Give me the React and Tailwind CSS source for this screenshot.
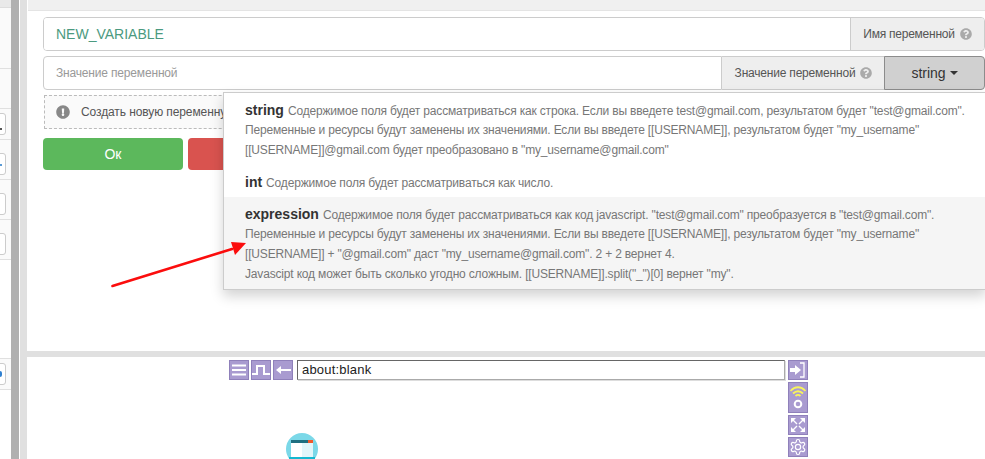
import React from "react";
import { FaQuestionCircle, FaExclamationCircle } from "react-icons/fa";

const Help = () => <FaQuestionCircle className="inline-block ml-[5px] w-[12px] h-[12px] text-[#aaa] align-[-1px]" />;

function SideInput({ top, mark }) {
  return (
    <div className={`absolute left-[-6px] ${top} w-[12px] h-[22px] bg-white border border-[#ccc] rounded-[3px]`}>
      {mark}
    </div>
  );
}

function Sidebar() {
  return (
    <div className="flex w-[27px] h-full shrink-0">
      <div className="w-[11px] flex flex-col bg-white overflow-hidden">
        <div className="h-[8px] bg-[#e9e9e9] shrink-0 border-b border-[#ddd]" />
        <div className="h-[61px] bg-[#fafafa] border-b border-[#e0e0e0] shrink-0" />
        <div className="h-[40px] bg-[#fafafa] border-b border-[#e0e0e0] shrink-0" />
        <div className="h-[31px] shrink-0 bg-[#fafafa] border-b border-[#e0e0e0] relative">
          <SideInput top="top-[4px]" mark={<span className="absolute left-[5px] top-[14px] w-[2px] h-[2px] bg-[#555]" />} />
        </div>
        <div className="h-[40px] shrink-0 bg-[#fafafa] border-b border-[#e0e0e0] relative">
          <SideInput top="top-[13px]" mark={<span className="absolute left-[5px] top-[10px] w-[2px] h-[2px] bg-[#5b9bd5]" />} />
        </div>
        <div className="h-[40px] shrink-0 bg-[#fafafa] border-b border-[#e0e0e0] relative">
          <SideInput top="top-[13px]" />
        </div>
        <div className="h-[40px] shrink-0 bg-[#fafafa] border-b border-[#e0e0e0] relative">
          <SideInput top="top-[13px]" />
        </div>
        <div className="h-[98px] shrink-0" />
        <div className="h-[32px] shrink-0 bg-[#fafafa] border-y border-[#e0e0e0] relative">
          <SideInput top="top-[4px]" mark={<span className="absolute left-[5px] top-[7px] w-[2px] h-[6px] rounded-r-full bg-[#2f80d0]" />} />
        </div>
      </div>
      <div className="w-[8px] bg-[#b0b0b0]" />
      <div className="w-px bg-white" />
      <div className="w-[7px] bg-[#e0e0e0]" />
    </div>
  );
}

function Form() {
  return (
    <div className="pl-[16px] flex flex-col font-['Liberation_Sans',sans-serif]">
      <div className="flex h-[34px] mt-[6px] border border-[#ccc] rounded-[4px] overflow-hidden">
        <div className="flex-1 bg-white px-[12px] flex items-center text-[14px] text-[#4b9a80]">NEW_VARIABLE</div>
        <div className="w-[134px] shrink-0 bg-[#eee] border-l border-[#ccc] flex items-center justify-center text-[12px] text-[#555] tracking-[-0.25px]">
          Имя переменной<Help />
        </div>
      </div>
      <div className="flex h-[34px] mt-[5px]">
        <div className="flex-1 bg-white border border-[#ccc] rounded-l-[4px] px-[12px] flex items-center text-[12px] text-[#999] tracking-[-0.17px]">Значение переменной</div>
        <div className="w-[163px] shrink-0 bg-[#eee] border-y border-[#ccc] flex items-center justify-center text-[12px] text-[#555] tracking-[-0.2px]">
          Значение переменной<Help />
        </div>
        <div className="w-[101px] ml-[-1px] shrink-0 bg-[#d0d0d0] border border-[#8c8c8c] rounded-r-[4px] flex items-center justify-center text-[14px] text-[#333]">
          string
          <span className="ml-[4px] w-0 h-0 border-x-[4px] border-x-transparent border-t-[4px] border-t-[#333]" />
        </div>
      </div>
      <div className="flex items-center h-[34px] mt-[5px] ml-px border border-dashed border-[#bbb] bg-[#fafafa] px-[11px] text-[12px] text-[#555] tracking-[-0.1px]">
        <FaExclamationCircle className="w-[14px] h-[14px] text-[#888] mr-[11px]" />
        Создать новую переменную
      </div>
      <div className="flex gap-[5px] mt-[9px]">
        <div className="w-[140px] h-[32px] rounded-[4px] bg-[#5cb85c] text-white text-[14px] flex items-center justify-center">Ок</div>
        <div className="w-[140px] h-[32px] rounded-[4px] bg-[#d9534f]" />
      </div>
    </div>
  );
}

function Item({ title, lines, active, cls }) {
  return (
    <div className={`px-[21px] ${cls} ${active ? "bg-[#f5f5f5]" : ""}`}>
      {lines.map((l, i) => (
        <div key={i} className="h-[20px] leading-[20px] whitespace-nowrap text-[12px] text-[#777] tracking-[-0.17px]">
          {i === 0 && <b className="text-[14px] font-bold text-[#333] tracking-[0px] mr-[4px]">{title}</b>}
          {l}
        </div>
      ))}
    </div>
  );
}

function Dropdown() {
  return (
    <div className="absolute left-[223px] top-[92px] w-[763px] h-[198px] bg-white border border-[#ccc] shadow-[0_6px_12px_rgba(0,0,0,0.175)] font-['Liberation_Sans',sans-serif]">
      <Item
        title="string"
        cls="pt-[7px] pb-[7px]"
        lines={[
          'Содержимое поля будет рассматриваться как строка. Если вы введете test@gmail.com, результатом будет "test@gmail.com".',
          'Переменные и ресурсы будут заменены их значениями. Если вы введете [[USERNAME]], результатом будет "my_username"',
          '[[USERNAME]]@gmail.com будет преобразовано в "my_username@gmail.com"',
        ]}
      />
      <Item title="int" cls="pt-[5px] pb-[5px]" lines={["Содержимое поля будет рассматриваться как число."]} />
      <Item
        title="expression"
        active
        cls="pt-[7px] h-[92px]"
        lines={[
          'Содержимое поля будет рассматриваться как код javascript. "test@gmail.com" преобразуется в "test@gmail.com".',
          'Переменные и ресурсы будут заменены их значениями. Если вы введете [[USERNAME]], результатом будет "my_username"',
          '[[USERNAME]] + "@gmail.com" даст "my_username@gmail.com". 2 + 2 вернет 4.',
          'Javascipt код может быть сколько угодно сложным. [[USERNAME]].split("_")[0] вернет "my".',
        ]}
      />
    </div>
  );
}

function Tool({ children, h = "h-[20px]" }) {
  return <div className={`w-[20px] ${h} bg-[#a99bd0] border border-[#8f80ba] flex items-center justify-center shrink-0`}>{children}</div>;
}

function Toolbar() {
  return (
    <div className="flex items-start pl-[202px] pt-[3px] gap-[3px]">
      <div className="flex gap-[2px]">
        <Tool>
          <svg width="14" height="14" viewBox="0 0 14 14" fill="none" stroke="#fff" strokeWidth="2"><path d="M0 2.5h14M0 7h14M0 11.5h14" /></svg>
        </Tool>
        <Tool>
          <svg width="18" height="16" viewBox="0 0 18 16" fill="none" stroke="#fff" strokeWidth="2"><path d="M0 12h5V4h7v8h6" /></svg>
        </Tool>
        <Tool>
          <svg width="16" height="16" viewBox="0 0 16 16" fill="#fff" stroke="#fff"><path d="M16 8H5" strokeWidth="2" /><path d="M1 8l5-4v8z" stroke="none" /></svg>
        </Tool>
      </div>
      <div className="w-[488px] h-[20px] ml-px border border-[#aaa] border-t-[#666] border-l-[#666] shadow-[1px_1px_0_#ddd] bg-white px-[4px] text-[13px] leading-[18px] text-[#222] font-['Liberation_Sans',sans-serif] tracking-[0.2px]">about:blank</div>
      <div className="flex flex-col gap-[2px]">
        <Tool>
          <svg width="18" height="18" viewBox="0 0 18 18" fill="#fff" stroke="#fff"><path d="M1 9h6" strokeWidth="4" /><path d="M6 4l6 5-6 5z" stroke="none" /><path d="M11 2h4v14h-4" fill="none" strokeWidth="1.3" /></svg>
        </Tool>
        <Tool h="h-[31px]">
          <svg width="18" height="29" viewBox="0 0 18 29" fill="none">
            <path d="M1.5 8C6 3 12 3 16.5 8M4 10.5c3-3 7-3 10 0M6.5 13c1.5-1.3 3.5-1.3 5 0" stroke="#f8f45c" strokeWidth="1.8" />
            <circle cx="9" cy="21" r="3.3" stroke="#fff" strokeWidth="2" />
          </svg>
        </Tool>
        <Tool>
          <svg width="16" height="16" viewBox="0 0 16 16" fill="#fff" stroke="#fff">
            <path d="M1 1h5L1 6zM15 1v5l-5-5zM1 15v-5l5 5zM15 15h-5l5-5z" stroke="none" />
            <path d="M3 3l4 4M13 3L9 7M3 13l4-4M13 13L9 9" strokeWidth="1.3" />
          </svg>
        </Tool>
        <Tool>
          <svg width="18" height="18" viewBox="0 0 24 24" fill="none" stroke="#fff" strokeWidth="1.6">
            <path d="M12.2 2h-.4a2 2 0 0 0-2 2v.2a2 2 0 0 1-1 1.7l-.4.3a2 2 0 0 1-2 0l-.2-.1a2 2 0 0 0-2.7.7l-.2.4a2 2 0 0 0 .7 2.7l.2.1a2 2 0 0 1 1 1.7v.5a2 2 0 0 1-1 1.8l-.2.1a2 2 0 0 0-.7 2.7l.2.4a2 2 0 0 0 2.7.7l.2-.1a2 2 0 0 1 2 0l.4.3a2 2 0 0 1 1 1.7v.2a2 2 0 0 0 2 2h.4a2 2 0 0 0 2-2v-.2a2 2 0 0 1 1-1.7l.4-.3a2 2 0 0 1 2 0l.2.1a2 2 0 0 0 2.7-.7l.2-.4a2 2 0 0 0-.7-2.7l-.2-.1a2 2 0 0 1-1-1.8v-.5a2 2 0 0 1 1-1.7l.2-.1a2 2 0 0 0 .7-2.7l-.2-.4a2 2 0 0 0-2.7-.7l-.2.1a2 2 0 0 1-2 0l-.4-.3a2 2 0 0 1-1-1.7V4a2 2 0 0 0-2-2z" />
            <circle cx="12" cy="12" r="3.5" />
          </svg>
        </Tool>
      </div>
    </div>
  );
}

export default function App() {
  return (
    <div className="relative w-[985px] h-[459px] overflow-hidden bg-white flex">
      <Sidebar />
      <div className="flex-1 min-w-0 flex flex-col">
        <div className="h-[351px] shrink-0 flex flex-col">
          <div className="h-[11px] ml-px bg-[#f0f0f0] border-b border-[#e4e4e4] shrink-0" />
          <Form />
        </div>
        <div className="h-[6px] bg-[#e0e0e0] shrink-0" />
        <Toolbar />
      </div>
      <Dropdown />
      <svg className="absolute left-[105px] top-[235px] pointer-events-none" width="145" height="55" viewBox="0 0 145 55" fill="none">
        <path d="M7.5 51L127 14" stroke="#fb0d0d" strokeWidth="2.6" strokeLinecap="round" />
        <path d="M141 8L126 7L130 20z" fill="#fb0d0d" />
      </svg>
      <svg className="absolute left-[286px] top-[433px]" width="32" height="26" viewBox="0 0 32 26">
        <circle cx="16" cy="16" r="16" fill="#7bd8e8" />
        <rect x="5" y="7" width="22" height="19" fill="#e2f6fa" />
        <rect x="5" y="7" width="22" height="3" fill="#1f6f80" />
        <rect x="22" y="7" width="5" height="3" fill="#f0592b" />
        <rect x="5" y="10" width="11" height="16" fill="#fff" />
        <rect x="3" y="24" width="26" height="2" fill="#15b8d0" />
      </svg>
    </div>
  );
}
